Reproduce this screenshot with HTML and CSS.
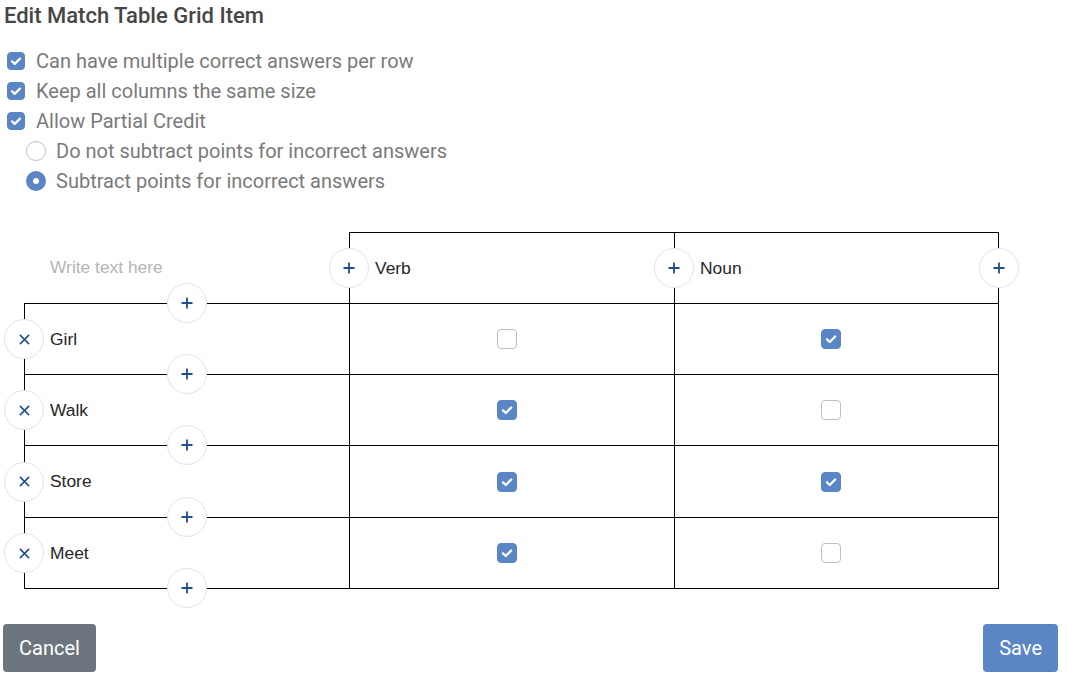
FILE: index.html
```html
<!DOCTYPE html>
<html>
<head>
<meta charset="utf-8">
<title>Edit Match Table Grid Item</title>
<link rel="stylesheet" href="styles.css">
</head>
<body>
<div class="page">
  <h1 class="title">Edit Match Table Grid Item</h1>

  <div class="options">
    <div class="opt">
      <span class="cb on"><svg viewBox="0 0 18 18" width="18" height="18"><path d="M5 9.3l2.7 2.6L13 6.6" fill="none" stroke="#fff" stroke-width="2.2" stroke-linecap="round" stroke-linejoin="round"/></svg></span>
      <span class="opt-label">Can have multiple correct answers per row</span>
    </div>
    <div class="opt">
      <span class="cb on"><svg viewBox="0 0 18 18" width="18" height="18"><path d="M5 9.3l2.7 2.6L13 6.6" fill="none" stroke="#fff" stroke-width="2.2" stroke-linecap="round" stroke-linejoin="round"/></svg></span>
      <span class="opt-label">Keep all columns the same size</span>
    </div>
    <div class="opt">
      <span class="cb on"><svg viewBox="0 0 18 18" width="18" height="18"><path d="M5 9.3l2.7 2.6L13 6.6" fill="none" stroke="#fff" stroke-width="2.2" stroke-linecap="round" stroke-linejoin="round"/></svg></span>
      <span class="opt-label">Allow Partial Credit</span>
    </div>
    <div class="opt sub">
      <span class="radio"></span>
      <span class="opt-label rl">Do not subtract points for incorrect answers</span>
    </div>
    <div class="opt sub">
      <span class="radio on"></span>
      <span class="opt-label rl">Subtract points for incorrect answers</span>
    </div>
  </div>

  <div class="grid">
    <div class="cell hfirst">
      <span class="ph">Write text here</span>
      <span class="circ c-bottom"><svg viewBox="0 0 12 12" width="12" height="12"><path d="M6 0.5v11M0.5 6h11" stroke="#1f4f8e" stroke-width="1.8"/></svg></span>
    </div>
    <div class="cell hcol">
      <span class="circ c-left"><svg viewBox="0 0 12 12" width="12" height="12"><path d="M6 0.5v11M0.5 6h11" stroke="#1f4f8e" stroke-width="1.8"/></svg></span>
      <span class="txt">Verb</span>
    </div>
    <div class="cell hcol rcol">
      <span class="circ c-left"><svg viewBox="0 0 12 12" width="12" height="12"><path d="M6 0.5v11M0.5 6h11" stroke="#1f4f8e" stroke-width="1.8"/></svg></span>
      <span class="txt">Noun</span>
      <span class="circ c-right"><svg viewBox="0 0 12 12" width="12" height="12"><path d="M6 0.5v11M0.5 6h11" stroke="#1f4f8e" stroke-width="1.8"/></svg></span>
    </div>

    <div class="cell bfirst">
      <span class="circ c-x"><svg viewBox="0 0 12 12" width="11" height="11"><path d="M1 1l10 10M11 1L1 11" stroke="#1f4f8e" stroke-width="1.7"/></svg></span>
      <span class="txt">Girl</span>
      <span class="circ c-bottom"><svg viewBox="0 0 12 12" width="12" height="12"><path d="M6 0.5v11M0.5 6h11" stroke="#1f4f8e" stroke-width="1.8"/></svg></span>
    </div>
    <div class="cell bcol"><span class="cb big"></span></div>
    <div class="cell bcol rcol"><span class="cb big on"><svg viewBox="0 0 20 20" width="20" height="20"><path d="M6 10.3l2.8 2.7L14.2 7.5" fill="none" stroke="#fff" stroke-width="2.3" stroke-linecap="round" stroke-linejoin="round"/></svg></span></div>

    <div class="cell bfirst">
      <span class="circ c-x"><svg viewBox="0 0 12 12" width="11" height="11"><path d="M1 1l10 10M11 1L1 11" stroke="#1f4f8e" stroke-width="1.7"/></svg></span>
      <span class="txt">Walk</span>
      <span class="circ c-bottom"><svg viewBox="0 0 12 12" width="12" height="12"><path d="M6 0.5v11M0.5 6h11" stroke="#1f4f8e" stroke-width="1.8"/></svg></span>
    </div>
    <div class="cell bcol"><span class="cb big on"><svg viewBox="0 0 20 20" width="20" height="20"><path d="M6 10.3l2.8 2.7L14.2 7.5" fill="none" stroke="#fff" stroke-width="2.3" stroke-linecap="round" stroke-linejoin="round"/></svg></span></div>
    <div class="cell bcol rcol"><span class="cb big"></span></div>

    <div class="cell bfirst">
      <span class="circ c-x"><svg viewBox="0 0 12 12" width="11" height="11"><path d="M1 1l10 10M11 1L1 11" stroke="#1f4f8e" stroke-width="1.7"/></svg></span>
      <span class="txt">Store</span>
      <span class="circ c-bottom"><svg viewBox="0 0 12 12" width="12" height="12"><path d="M6 0.5v11M0.5 6h11" stroke="#1f4f8e" stroke-width="1.8"/></svg></span>
    </div>
    <div class="cell bcol"><span class="cb big on"><svg viewBox="0 0 20 20" width="20" height="20"><path d="M6 10.3l2.8 2.7L14.2 7.5" fill="none" stroke="#fff" stroke-width="2.3" stroke-linecap="round" stroke-linejoin="round"/></svg></span></div>
    <div class="cell bcol rcol"><span class="cb big on"><svg viewBox="0 0 20 20" width="20" height="20"><path d="M6 10.3l2.8 2.7L14.2 7.5" fill="none" stroke="#fff" stroke-width="2.3" stroke-linecap="round" stroke-linejoin="round"/></svg></span></div>

    <div class="cell bfirst brow">
      <span class="circ c-x"><svg viewBox="0 0 12 12" width="11" height="11"><path d="M1 1l10 10M11 1L1 11" stroke="#1f4f8e" stroke-width="1.7"/></svg></span>
      <span class="txt">Meet</span>
      <span class="circ c-bottom"><svg viewBox="0 0 12 12" width="12" height="12"><path d="M6 0.5v11M0.5 6h11" stroke="#1f4f8e" stroke-width="1.8"/></svg></span>
    </div>
    <div class="cell bcol brow"><span class="cb big on"><svg viewBox="0 0 20 20" width="20" height="20"><path d="M6 10.3l2.8 2.7L14.2 7.5" fill="none" stroke="#fff" stroke-width="2.3" stroke-linecap="round" stroke-linejoin="round"/></svg></span></div>
    <div class="cell bcol rcol brow"><span class="cb big"></span></div>
  </div>

  <div class="actions">
    <button class="btn cancel">Cancel</button>
    <button class="btn save">Save</button>
  </div>
</div>
</body>
</html>
```

FILE: styles.css
```css
html, body {
  margin: 0;
  padding: 0;
  background: #fff;
}
body {
  font-family: Roboto, "Liberation Sans", Arial, sans-serif;
}
.page {
  width: 1067px;
}
.title {
  margin: 0;
  padding-left: 4px;
  height: 32px;
  line-height: 32px;
  font-size: 22px;
  font-weight: 500;
  color: #464646;
}
.options {
  margin-top: 14px;
  display: flex;
  flex-direction: column;
}
.opt {
  height: 30px;
  display: flex;
  align-items: center;
  padding-left: 7px;
}
.opt.sub {
  padding-left: 26px;
}
.opt-label {
  margin-left: 11px;
  font-size: 20px;
  color: #7a7a7a;
}
.opt-label.rl {
  margin-left: 10px;
}
.cb {
  box-sizing: border-box;
  width: 18px;
  height: 18px;
  border-radius: 4px;
  border: 1px solid #b8c0c9;
  background: #fff;
  display: inline-flex;
  flex: none;
}
.cb svg {
  display: block;
  margin: -1px;
}
.cb.on {
  background: #5a86c5;
  border-color: #5a86c5;
}
.cb.big {
  width: 20px;
  height: 20px;
}
.radio {
  box-sizing: border-box;
  width: 20px;
  height: 20px;
  border-radius: 50%;
  border: 1px solid #b9bec4;
  flex: none;
}
.radio.on {
  border: 7px solid #5a86c5;
  background: #fff;
}

.grid {
  margin-top: 36px;
  margin-left: 24px;
  width: 975px;
  display: grid;
  grid-template-columns: 325px 325px 325px;
  grid-template-rows: 71px 71px 71px 72px 72px;
  font-family: "Liberation Sans", Arial, sans-serif;
  font-size: 17.4px;
  color: #262626;
}
.cell {
  box-sizing: border-box;
  position: relative;
  display: flex;
  align-items: center;
}
.hfirst {
  padding-left: 26px;
}
.ph {
  color: #b5b5b5;
}
.hcol {
  border-top: 1px solid #000;
  border-left: 1px solid #000;
  padding-left: 25px;
}
.bfirst {
  border-top: 1px solid #000;
  border-left: 1px solid #000;
  padding-left: 25px;
}
.bcol {
  border-top: 1px solid #000;
  border-left: 1px solid #000;
  justify-content: center;
  padding-right: 11px;
}
.rcol {
  border-right: 1px solid #000;
}
.brow {
  border-bottom: 1px solid #000;
}

.circ {
  position: absolute;
  box-sizing: border-box;
  width: 40px;
  height: 40px;
  border-radius: 50%;
  border: 1px solid #dce5f1;
  background: #fff;
  display: flex;
  align-items: center;
  justify-content: center;
  z-index: 2;
}
.c-bottom {
  left: calc(50% - 20px);
  top: calc(100% - 20px);
}
.c-left {
  left: -21px;
  top: calc(50% - 20px);
}
.c-right {
  right: -21px;
  top: calc(50% - 20px);
}
.c-x {
  left: -21px;
  top: calc(50% - 20px);
}

.actions {
  margin-top: 35px;
  padding-left: 3px;
  padding-right: 9px;
  display: flex;
  justify-content: space-between;
}
.btn {
  height: 48px;
  border: none;
  border-radius: 4px;
  padding: 0 16px;
  font-family: Roboto, "Liberation Sans", Arial, sans-serif;
  font-size: 20px;
  color: #fff;
}
.cancel {
  background: #6c757d;
}
.save {
  background: #5a86c5;
  padding: 0 16px;
}
```
